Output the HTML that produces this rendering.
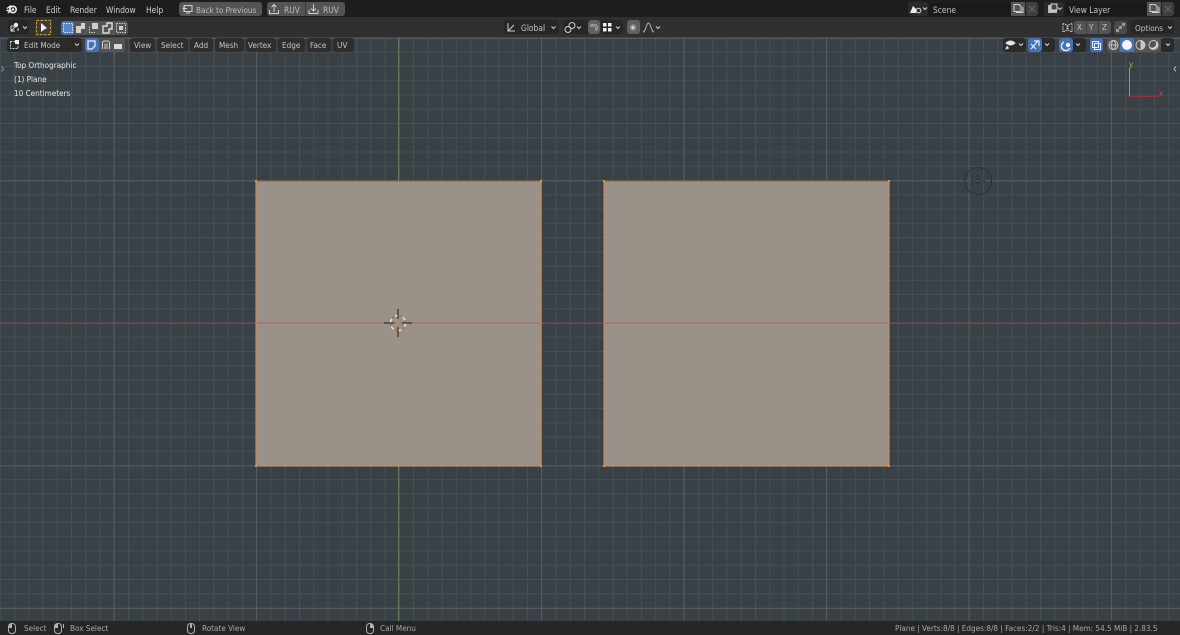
<!DOCTYPE html>
<html><head><meta charset="utf-8">
<style>
html,body{margin:0;padding:0;background:#394146}
#r{position:relative;width:1180px;height:635px;overflow:hidden;background:#394146;font-family:"DejaVu Sans Condensed","DejaVu Sans","Liberation Sans",sans-serif;font-stretch:condensed;font-size:8.4px;color:#c4c4c4;filter:blur(.3px)}
.t{position:absolute;white-space:nowrap;line-height:12px;height:12px}
.b{position:absolute;border-radius:3px}
svg{position:absolute;left:0;top:0}
</style></head><body><div id="r">
<svg width="1180" height="635" viewBox="0 0 1180 635">
<defs>
<pattern id="mn" width="14.25" height="14.25" patternUnits="userSpaceOnUse" x="-0.25" y="9">
<path d="M.5 0V14.25M0 .5H14.25" stroke="#5b6568" stroke-opacity=".4" stroke-width="1" fill="none"/>
</pattern>
<pattern id="mj" width="142.5" height="142.5" patternUnits="userSpaceOnUse" x="113.5" y="38">
<path d="M.5 0V142.5M0 .5H142.5" stroke="#7b8588" stroke-opacity=".3" stroke-width="1" fill="none"/>
</pattern>
</defs>
<rect width="1180" height="635" fill="#394146"/>
<rect width="1180" height="635" fill="url(#mn)"/>
<rect width="1180" height="635" fill="url(#mj)"/>
<path d="M398.5 38V621" stroke="#5f7a56" stroke-width="1"/>
<path d="M0 323H1180" stroke="#7f4a52" stroke-width="1"/>
<rect x="256" y="181" width="285" height="285" fill="#9a9188"/>
<rect x="604" y="181" width="285" height="285" fill="#9a9188"/>
<path d="M398.5 181V466" stroke="#8f9a80" stroke-opacity=".35"/>
<path d="M256 323H541M604 323H889" stroke="#a2666a" stroke-width="1"/>
<rect x="256" y="181" width="285" height="285" fill="none" stroke="#c98f55" stroke-width="1.1"/>
<rect x="604" y="181" width="285" height="285" fill="none" stroke="#c98f55" stroke-width="1.1"/>
<path d="M256 181H541M604 181H889" stroke="#6b5a3a" stroke-width=".8"/>
<g fill="#d9953a"><rect x="255" y="180" width="2" height="2"/><rect x="540" y="180" width="2" height="2"/><rect x="255" y="465" width="2" height="2"/><rect x="540" y="465" width="2" height="2"/><rect x="603" y="180" width="2" height="2"/><rect x="888" y="180" width="2" height="2"/><rect x="603" y="465" width="2" height="2"/><rect x="888" y="465" width="2" height="2"/></g>
<!-- 3D cursor -->
<circle cx="398" cy="323" r="7.500" fill="none" stroke="#e8e0dc" stroke-width="1.500" stroke-dasharray="4 4"/>
<circle cx="398" cy="323" r="7.500" fill="none" stroke="#b5564f" stroke-width="1.500" stroke-dasharray="4 4" stroke-dashoffset="4" stroke-opacity=".6"/>
<path d="M398 309V319M398 327V337M384 323H394M402 323H412" stroke="#1c1c1c" stroke-width="1"/>
<circle cx="398" cy="323" r="1.500" fill="#c58a40"/>
<!-- view gizmo -->
<circle cx="978" cy="181" r="13.500" fill="none" stroke="#2b3034" stroke-width="1"/>
<circle cx="978" cy="181" r="2" fill="none" stroke="#2b3034" stroke-width="1"/>
<path d="M978 174V177M978 185V188M971 181H974M982 181H985" stroke="#2b3034" stroke-width="1"/>
<!-- axis widget -->
<path d="M1129.500 68V97" stroke="#7ab03a" stroke-width="1"/>
<path d="M1129 96.500H1159" stroke="#9c3038" stroke-width="1"/>
</svg>

<!-- top bar -->
<div style="position:absolute;left:0;top:0;width:1180px;height:17px;background:#1e1e1e"></div>
<div style="position:absolute;left:0;top:17px;width:1180px;height:20px;background:#303030"></div>
<div style="position:absolute;left:0;top:621px;width:1180px;height:14px;background:#262626"></div>

<div class="t" style="left:24px;top:3.500px;color:#d0d0d0">File</div>
<div class="t" style="left:46px;top:3.500px;color:#d0d0d0">Edit</div>
<div class="t" style="left:70px;top:3.500px;color:#d0d0d0">Render</div>
<div class="t" style="left:106px;top:3.500px;color:#d0d0d0">Window</div>
<div class="t" style="left:146px;top:3.500px;color:#d0d0d0">Help</div>

<svg width="1180" height="635" viewBox="0 0 1180 635" style="z-index:1">
<!-- blender logo -->
<g fill="none" stroke="#f0f0f0">
<circle cx="13" cy="9.500" r="3.200" stroke-width="1.600"/>
<path d="M7 8.500L11 5.500M6.500 10.500H10M8 13L11.500 10" stroke-width="1.400"/>
</g>
<circle cx="13" cy="9.500" r="1.200" fill="#f0f0f0"/>
</svg>

<div class="b" style="left:179px;top:2px;width:83px;height:14px;background:#545454"></div>
<div class="b" style="left:267px;top:2px;width:78px;height:14px;background:#545454"></div>
<div style="position:absolute;left:305px;top:2px;width:1px;height:14px;background:#3a3a3a"></div>
<div class="t" style="left:196px;top:3.500px;font-size:8.100px;color:#bdbdbd">Back to Previous</div>
<div class="t" style="left:284px;top:3.500px;color:#bdbdbd">RUV</div>
<div class="t" style="left:323px;top:3.500px;color:#bdbdbd">RUV</div>
<svg width="1180" height="635" viewBox="0 0 1180 635" style="z-index:1">
<g fill="none" stroke="#d0d0d0" stroke-width="1">
<path d="M184 5.500H192V11.500H184ZM186 13H190M183 8.500H187M185 6.500L183 8.500L185 10.500"/>
<path d="M269.500 10V13.500H278.500V10M274 12V5M271.500 7L274 4.500L276.500 7"/>
<path d="M309 10V13.500H318V10M313.500 4V11M311 8.500L313.500 11L316 8.500"/>
</g>
</svg>

<!-- second row left -->
<div class="b" style="left:8px;top:20px;width:21px;height:14px;background:#262626"></div>
<div class="b" style="left:35px;top:19px;width:17px;height:17px;background:#3c3c3c"></div>
<div class="b" style="left:61px;top:21px;width:67px;height:14px;background:#545454"></div>
<div class="b" style="left:61px;top:21px;width:13px;height:14px;background:#4772b3"></div>
<svg width="1180" height="635" viewBox="0 0 1180 635" style="z-index:1">
<rect x="36.500" y="20.500" width="14" height="14" fill="none" stroke="#c9a040" stroke-dasharray="2.500 1.500"/>
<path d="M41 23V32L43.500 30L47 28Z" fill="#f2f2f2"/>
<g fill="none" stroke="#ddd">
<path d="M11 31L17 25M11 26H14M18 31V28M11 26V31H15" stroke-width="1"/>
<circle cx="16" cy="25" r="2.200" fill="#eee" stroke="none"/>
<path d="M23 26.500L25 28.500L27 26.500" stroke-width="1"/>
</g>
<rect x="63.500" y="23.500" width="9" height="9" fill="#5b85c8" stroke="#dde6f5" stroke-dasharray="1.500 1"/>
<path d="M76 26H81V23H85V29H81V33H76Z" fill="#cfcfcf"/>
<path d="M89.500 26.500V32.500H95.500" fill="none" stroke="#ccc" stroke-dasharray="1.500 1"/><rect x="92" y="23" width="6" height="6" fill="#cfcfcf"/>
<path d="M103 26H107V23H112V29H109V33H103Z" fill="none" stroke="#ddd" stroke-width="1.400"/>
<rect x="116.500" y="23.500" width="9" height="9" fill="none" stroke="#ccc" stroke-dasharray="1.500 1"/><rect x="119" y="26" width="4" height="4" fill="#cfcfcf"/>
</svg>

<!-- center header -->
<div class="b" style="left:504px;top:20px;width:55px;height:14px;background:#262626"></div>
<div class="b" style="left:563px;top:20px;width:30px;height:14px;background:#262626"></div>
<div class="b" style="left:588px;top:20px;width:12px;height:14px;background:#606060"></div>
<div class="b" style="left:601px;top:20px;width:22px;height:14px;background:#262626"></div>
<div class="b" style="left:627px;top:20px;width:13px;height:14px;background:#606060"></div>
<div class="t" style="left:521px;top:22px">Global</div>
<svg width="1180" height="635" viewBox="0 0 1180 635" style="z-index:1">
<g fill="none" stroke="#d0d0d0" stroke-width="1">
<path d="M508 23V31H515M508 31L514 25"/>
<path d="M551.500 26.500L553.500 28.500L555.500 26.500"/>
<circle cx="568" cy="29.500" r="3"/><circle cx="572" cy="25.500" r="3"/>
<path d="M577 26.500L579 28.500L581 26.500"/>
<path d="M590 26A4.500 4.500 0 0 1 598 28L596 31M591 27A3 3 0 0 1 596 28L595 30" stroke="#a8a8a8"/>
<path d="M616 26.500L618 28.500L620 26.500"/>
<path d="M643 32C646 32 646 23 648.500 23C651 23 651 32 654 32" stroke="#b0b0b0"/>
<path d="M656 26.500L658 28.500L660 26.500"/>
</g>
<g fill="#f2f2f2"><rect x="603" y="23" width="3.500" height="3.500"/><rect x="608" y="23" width="3.500" height="3.500"/><rect x="603" y="28" width="3.500" height="3.500"/><rect x="608" y="28" width="3.500" height="3.500"/></g>
<circle cx="633" cy="27.500" r="3.200" fill="#8e8e8e"/><circle cx="633" cy="27.500" r="1.300" fill="#e0e0e0"/>
</svg>

<!-- top right -->
<div class="b" style="left:908px;top:2px;width:20px;height:14px;background:#2b2b2b"></div>
<div style="position:absolute;left:929px;top:2px;width:81px;height:14px;background:#1a1a1a;border-radius:3px 0 0 3px"></div>
<div style="position:absolute;left:1011px;top:2px;width:14px;height:14px;background:#545454"></div>
<div style="position:absolute;left:1026px;top:2px;width:12px;height:14px;background:#3f3f3f;border-radius:0 3px 3px 0"></div>
<div class="t" style="left:933px;top:3.500px">Scene</div>
<div class="b" style="left:1044px;top:2px;width:20px;height:14px;background:#2b2b2b"></div>
<div style="position:absolute;left:1066px;top:2px;width:80px;height:14px;background:#1a1a1a;border-radius:3px 0 0 3px"></div>
<div style="position:absolute;left:1147px;top:2px;width:14px;height:14px;background:#545454"></div>
<div style="position:absolute;left:1162px;top:2px;width:12px;height:14px;background:#3f3f3f;border-radius:0 3px 3px 0"></div>
<div class="t" style="left:1069px;top:3.500px">View Layer</div>
<svg width="1180" height="635" viewBox="0 0 1180 635" style="z-index:1">
<path d="M910 13L913 6L916 9V13Z" fill="#ededed"/><circle cx="918.500" cy="10.500" r="2.300" fill="none" stroke="#ddd"/>
<path d="M923 7.500L925 9.500L927 7.500" fill="none" stroke="#ccc"/>
<g fill="none" stroke="#d0d0d0"><path d="M1014 4.500H1019L1021 6.500V11.500H1014ZM1016 12.500H1023V7"/>
<path d="M1150 4.500H1155L1157 6.500V11.500H1150ZM1152 12.500H1159V7"/></g>
<path d="M1029 6L1035 12M1035 6L1029 12" stroke="#6a6a6a"/><path d="M1165 6L1171 12M1171 6L1165 12" stroke="#6a6a6a"/>
<rect x="1048" y="5" width="9" height="8" fill="#bbb"/><rect x="1051" y="4" width="6" height="6" fill="#444" stroke="#ddd"/>
<path d="M1058 7.500L1060 9.500L1062 7.500" fill="none" stroke="#ccc"/>
</svg>

<!-- second row right -->
<div class="b" style="left:1074px;top:21px;width:37px;height:13px;background:#545454"></div>
<div class="b" style="left:1114px;top:21px;width:13px;height:13px;background:#4a4a4a"></div>
<div class="b" style="left:1131px;top:20px;width:43px;height:14px;background:#262626"></div>
<div style="position:absolute;left:1086px;top:21px;width:1px;height:13px;background:#3a3a3a"></div>
<div style="position:absolute;left:1098px;top:21px;width:1px;height:13px;background:#3a3a3a"></div>
<div class="t" style="left:1077px;top:22px;font-size:8px">X</div>
<div class="t" style="left:1089px;top:22px;font-size:8px">Y</div>
<div class="t" style="left:1102px;top:22px;font-size:8px">Z</div>
<div class="t" style="left:1135px;top:22px;font-size:8.100px">Options</div>
<svg width="1180" height="635" viewBox="0 0 1180 635" style="z-index:1">
<path d="M1168 26.500L1170 28.500L1172 26.500" fill="none" stroke="#ccc"/>
<path d="M1063 23.500L1067 25V30L1063 32ZM1072 23.500L1068 25V30L1072 32Z" fill="none" stroke="#ccc" stroke-dasharray="1.500 .8"/>
<g fill="#9a9a9a"><rect x="1116" y="29" width="3" height="3"/><rect x="1122" y="23" width="3" height="3"/><rect x="1119" y="26" width="3" height="3"/></g>
</svg>

<!-- third row left -->
<div class="b" style="left:7px;top:38px;width:75px;height:14px;background:#2a2a2a"></div>
<div class="b" style="left:85px;top:38px;width:40px;height:14px;background:#545454"></div>
<div class="b" style="left:85px;top:38px;width:14px;height:14px;background:#4772b3"></div>
<div class="b" style="left:130px;top:38px;width:25px;height:14px;background:#2e2e2e"></div>
<div class="b" style="left:157px;top:38px;width:31px;height:14px;background:#2e2e2e"></div>
<div class="b" style="left:190px;top:38px;width:23px;height:14px;background:#2e2e2e"></div>
<div class="b" style="left:215px;top:38px;width:29px;height:14px;background:#2e2e2e"></div>
<div class="b" style="left:246px;top:38px;width:30px;height:14px;background:#2e2e2e"></div>
<div class="b" style="left:278px;top:38px;width:27px;height:14px;background:#2e2e2e"></div>
<div class="b" style="left:307px;top:38px;width:24px;height:14px;background:#2e2e2e"></div>
<div class="b" style="left:333px;top:38px;width:21px;height:14px;background:#2e2e2e"></div>
<div class="t" style="left:24px;top:39px;font-size:8.100px">Edit Mode</div>
<div class="t" style="left:134px;top:39px;font-size:8.100px">View</div>
<div class="t" style="left:161px;top:39px;font-size:8.100px">Select</div>
<div class="t" style="left:194px;top:39px;font-size:8.100px">Add</div>
<div class="t" style="left:219px;top:39px;font-size:8.100px">Mesh</div>
<div class="t" style="left:248px;top:39px;font-size:8.100px">Vertex</div>
<div class="t" style="left:282px;top:39px;font-size:8.100px">Edge</div>
<div class="t" style="left:310px;top:39px;font-size:8.100px">Face</div>
<div class="t" style="left:337px;top:39px;font-size:8.100px">UV</div>
<svg width="1180" height="635" viewBox="0 0 1180 635" style="z-index:1">
<path d="M10.500 41.500H18V48.500H10.500Z" fill="none" stroke="#ccc" stroke-dasharray="2 1"/><rect x="15" y="40" width="4" height="4" fill="#eee"/>
<path d="M75 43.500L77 45.500L79 43.500" fill="none" stroke="#ccc"/>
<path d="M88 41H95V46L92 49H88Z" fill="none" stroke="#e8eefa" stroke-width="1.300"/>
<path d="M102.500 49V42.500A2 2 0 0 1 104.500 41H107.500A2 2 0 0 1 109.500 43V49M105 49V43.500M107 49V43.500" fill="none" stroke="#cfcfcf"/>
<path d="M114 44H122V41H122V49H114Z" fill="#d8d8d8"/>
</svg>

<!-- third row right -->
<div class="b" style="left:1003px;top:38px;width:23px;height:14px;background:#2a2a2a"></div>
<div class="b" style="left:1028px;top:38px;width:27px;height:14px;background:#2a2a2a"></div>
<div class="b" style="left:1028px;top:38px;width:14px;height:14px;background:#4772b3"></div>
<div class="b" style="left:1059px;top:38px;width:27px;height:14px;background:#2a2a2a"></div>
<div class="b" style="left:1059px;top:38px;width:14px;height:14px;background:#4772b3"></div>
<div class="b" style="left:1090px;top:38px;width:13px;height:14px;background:#4772b3"></div>
<div class="b" style="left:1107px;top:38px;width:54px;height:14px;background:#545454"></div>
<div style="position:absolute;left:1120px;top:38px;width:14px;height:14px;background:#4772b3"></div>
<div class="b" style="left:1161px;top:38px;width:13px;height:14px;background:#2a2a2a"></div>
<svg width="1180" height="635" viewBox="0 0 1180 635" style="z-index:1">
<g fill="none" stroke="#d8d8d8" stroke-width="1">
<path d="M1006 43Q1010.500 39 1015 43Q1010.500 47 1006 43Z" fill="#e8e8e8"/>
<path d="M1007 46L1006 49L1009 48" fill="#e8e8e8"/>
<path d="M1019 43.500L1021 45.500L1023 43.500M1045 43.500L1047 45.500L1049 43.500M1076 43.500L1078 45.500L1080 43.500M1166 43.500L1168 45.500L1170 43.500"/>
<path d="M1031 49L1038 41M1034 41H1039V46M1031 44L1036 49" stroke="#e8eefa" stroke-width="1.200"/>
<path d="M1064 42A4.500 4.500 0 1 0 1070 48" stroke="#e8eefa" stroke-width="1.300"/>
<rect x="1092.500" y="41.500" width="6" height="6" stroke="#e8eefa"/><rect x="1094.500" y="43.500" width="6" height="6" stroke="#e8eefa"/>
<circle cx="1113.500" cy="45" r="4.500" stroke="#c8c8c8"/><ellipse cx="1113.500" cy="45" rx="2" ry="4.500" stroke="#c8c8c8"/><path d="M1109 45H1118" stroke="#c8c8c8"/>
<circle cx="1140.500" cy="45" r="4.500" stroke="#c8c8c8"/>
<circle cx="1153.500" cy="45" r="4.500" stroke="#c8c8c8"/>
</g>
<circle cx="1068" cy="45" r="2.200" fill="#eef"/>
<circle cx="1127" cy="45" r="5" fill="#f4f4f4"/>
<path d="M1140.500 40.500A4.500 4.500 0 0 1 1140.500 49.500Z" fill="#c8c8c8"/>
<path d="M1150.500 48A4.500 4.500 0 0 0 1156.500 42" fill="none" stroke="#d8d8d8" stroke-width="1.600"/>
<path d="M1176 66.500L1174 69L1176 71.500" fill="none" stroke="#bbb"/>
<path d="M1.500 66.500L3.500 69L1.500 71.500" fill="none" stroke="#999"/>
</svg>

<div class="t" style="left:14px;top:59px;color:#e6e6e6;font-size:8.100px">Top Orthographic</div>
<div class="t" style="left:14px;top:73px;color:#e6e6e6;font-size:8.100px">(1) Plane</div>
<div class="t" style="left:14px;top:87px;color:#e6e6e6;font-size:8.100px">10 Centimeters</div>
<div class="t" style="left:1129px;top:59px;color:#8cbf3c;font-size:8px">y</div>
<div class="t" style="left:1159px;top:88px;color:#c0454f;font-size:8px">x</div>

<!-- status bar -->
<div class="t" style="left:24px;top:622px;color:#a8a8a8;font-size:8.100px">Select</div>
<div class="t" style="left:70px;top:622px;color:#a8a8a8;font-size:8.100px">Box Select</div>
<div class="t" style="left:202px;top:622px;color:#a8a8a8;font-size:8.100px">Rotate View</div>
<div class="t" style="left:380px;top:622px;color:#a8a8a8;font-size:8.100px">Call Menu</div>
<div class="t" style="left:895px;top:622px;color:#a8a8a8;font-size:8.100px">Plane | Verts:8/8 | Edges:8/8 | Faces:2/2 | Tris:4 | Mem: 54.5 MiB | 2.83.5</div>
<svg width="1180" height="635" viewBox="0 0 1180 635" style="z-index:1">
<g fill="none" stroke="#b0b0b0" stroke-width="1">
<rect x="8.500" y="623.500" width="7" height="10" rx="3"/>
<rect x="54.500" y="623.500" width="7" height="10" rx="3"/>
<rect x="187.500" y="623.500" width="7" height="10" rx="3"/>
<rect x="366.500" y="623.500" width="7" height="10" rx="3"/>
<path d="M63.500 624V628"/>
</g>
<g fill="#b0b0b0"><rect x="9" y="624" width="3" height="4"/><rect x="55" y="624" width="3" height="4"/><rect x="190" y="624" width="2" height="4"/><rect x="370" y="624" width="3" height="4"/></g>
</svg>
</div></body></html>
